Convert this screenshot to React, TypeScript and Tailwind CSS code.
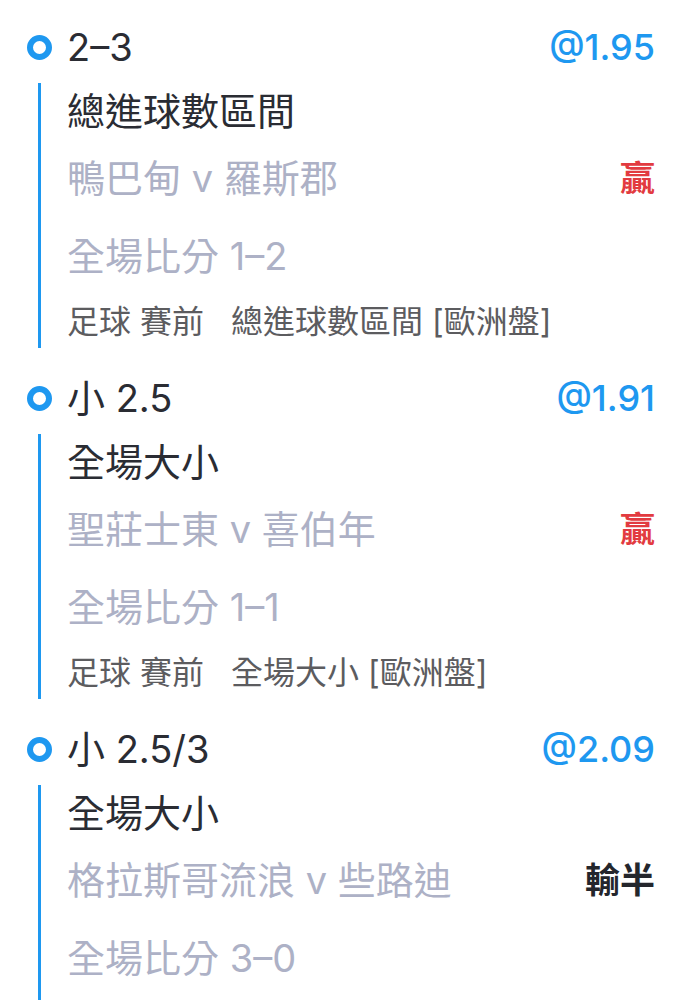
import React from "react";

type Bet = {
  pick: string;
  odds: string;
  market: string;
  teams: string;
  result: string;
  resultTone: "win" | "lose";
  score: string;
  tags?: string;
};

const bets: Bet[] = [
  {
    pick: "2–3",
    odds: "@1.95",
    market: "總進球數區間",
    teams: "鴨巴甸 v 羅斯郡",
    result: "贏",
    resultTone: "win",
    score: "全場比分 1–2",
    tags: "足球 賽前\u00a0\u00a0 總進球數區間 [歐洲盤]",
  },
  {
    pick: "小 2.5",
    odds: "@1.91",
    market: "全場大小",
    teams: "聖莊士東 v 喜伯年",
    result: "贏",
    resultTone: "win",
    score: "全場比分 1–1",
    tags: "足球 賽前\u00a0\u00a0 全場大小 [歐洲盤]",
  },
  {
    pick: "小 2.5/3",
    odds: "@2.09",
    market: "全場大小",
    teams: "格拉斯哥流浪 v 些路迪",
    result: "輸半",
    resultTone: "lose",
    score: "全場比分 3–0",
    tags: "足球 賽前\u00a0\u00a0 全場大小 [歐洲盤]",
  },
];

function BetItem({ bet }: { bet: Bet }) {
  return (
    <div className="mb-[20px]">
      {/* header: timeline dot + pick + odds */}
      <div className="flex h-[60px] items-center">
        <div className="flex w-[24px] shrink-0 justify-center">
          <span className="block h-[25px] w-[25px] shrink-0 rounded-full border-[6px] border-[#1e98f0]" />
        </div>
        <span className="ml-4 text-[38px] text-[#2a2c33]">{bet.pick}</span>
        <span className="ml-auto text-[36px] font-medium text-[#1e98f0]">{bet.odds}</span>
      </div>

      {/* body with the timeline rail */}
      <div className="mt-[6px] flex">
        <div className="flex w-[24px] shrink-0 justify-center">
          <div className="w-[3px] bg-[#1e98f0]" />
        </div>
        <div className="ml-4 flex-1">
          <div className="flex h-[56px] items-center text-[38px] text-[#2a2c33]">{bet.market}</div>
          <div className="flex h-[78px] items-center justify-between">
            <span className="text-[38px] text-[#adb1c6]">{bet.teams}</span>
            <span
              className={
                bet.resultTone === "win"
                  ? "text-[35px] font-bold text-[#e23b40]"
                  : "text-[35px] font-bold text-[#24262c]"
              }
            >
              {bet.result}
            </span>
          </div>
          <div className="flex h-[78px] items-center text-[38px] text-[#adb1c6]">{bet.score}</div>
          <div className="flex h-[53px] items-center whitespace-nowrap text-[32px] text-[#5c5c5f]">{bet.tags}</div>
        </div>
      </div>
    </div>
  );
}

export default function App() {
  return (
    <div
      className="h-[1000px] overflow-hidden bg-white pt-[17px] pl-[27px] pr-[34px]"
      style={{ fontFamily: 'Inter, "Noto Sans CJK TC", sans-serif' }}
    >
      {bets.map((b, i) => (
        <BetItem key={i} bet={b} />
      ))}
    </div>
  );
}
